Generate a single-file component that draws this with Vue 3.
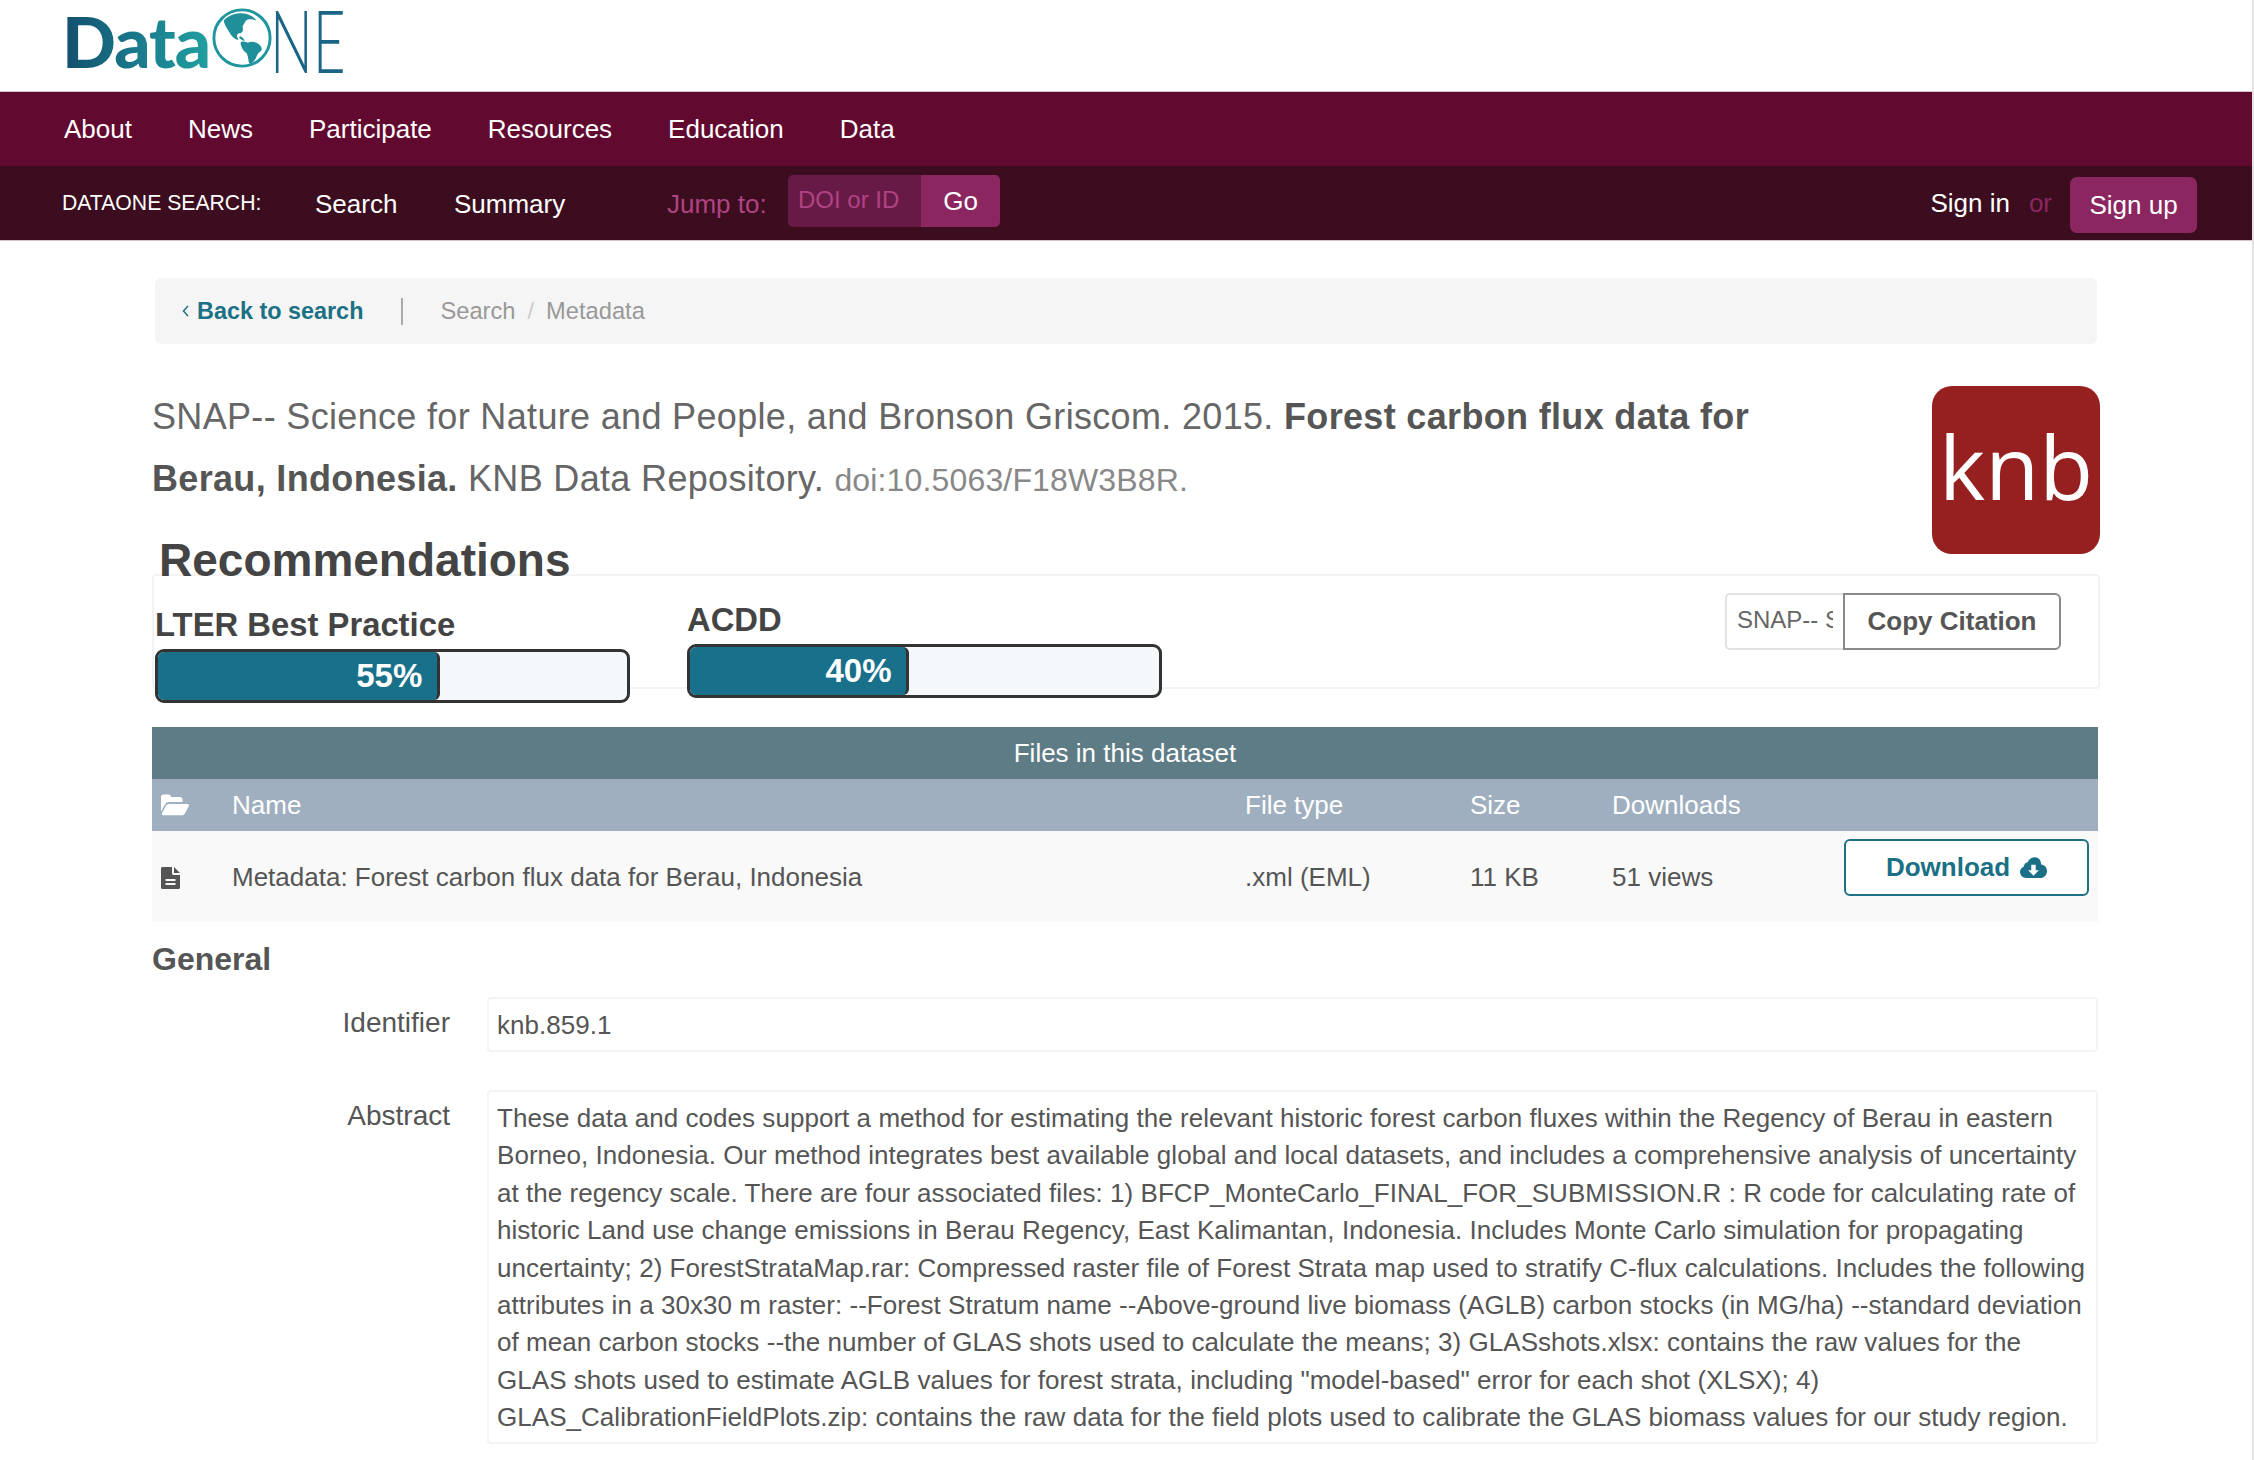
<script setup>
const mainNav = ["About", "News", "Participate", "Resources", "Education", "Data"];

const bars = [
  { label: "LTER Best Practice", value: 55, fill: "60.2%", cls: "score-lter" },
  { label: "ACDD", value: 40, fill: "46.8%", cls: "score-acdd" },
];

const abstractLines = [
  "These data and codes support a method for estimating the relevant historic forest carbon fluxes within the Regency of Berau in eastern",
  "Borneo, Indonesia. Our method integrates best available global and local datasets, and includes a comprehensive analysis of uncertainty",
  "at the regency scale. There are four associated files: 1) BFCP_MonteCarlo_FINAL_FOR_SUBMISSION.R : R code for calculating rate of",
  "historic Land use change emissions in Berau Regency, East Kalimantan, Indonesia. Includes Monte Carlo simulation for propagating",
  "uncertainty; 2) ForestStrataMap.rar: Compressed raster file of Forest Strata map used to stratify C-flux calculations. Includes the following",
  "attributes in a 30x30 m raster: --Forest Stratum name --Above-ground live biomass (AGLB) carbon stocks (in MG/ha) --standard deviation",
  "of mean carbon stocks --the number of GLAS shots used to calculate the means; 3) GLASshots.xlsx: contains the raw values for the",
  "GLAS shots used to estimate AGLB values for forest strata, including \"model-based\" error for each shot (XLSX); 4)",
  "GLAS_CalibrationFieldPlots.zip: contains the raw data for the field plots used to calibrate the GLAS biomass values for our study region.",
];
</script>

<template>
  <div class="page">
    <header class="logo-bar">
      <div class="logo">
        <span class="logo-data">Data</span>
        <svg class="globe" viewBox="0 0 64 64" aria-hidden="true">
          <circle cx="32" cy="32" r="29" fill="none" stroke="#1f959d" stroke-width="3" />
          <path fill="#1f8f9a" d="M14 13c5-5 14-8 22-6 4 1 9 4 11 7-3-1-6-2-9-1-3 1-3 4-5 6-1 2 1 5-1 7-2 2-4 0-5 3-1 2 2 4 1 5-4-1-7-4-9-8-2-3-4-6-5-9-1-2-1-3 0-4z" />
          <path fill="#1f8f9a" d="M31 36c2-1 5 0 7 1 4-2 9-1 12 2 2 2 3 4 2 6-2 2-4 3-5 6-1 3-4 7-7 8-2-3-1-7-3-11-2-2-4-3-5-6-1-2-2-4-1-6z" />
          <path fill="#1f8f9a" d="M30 30l3 2 2 3-3-1-3-2z" />
        </svg>
        <span class="logo-ne">NE</span>
      </div>
    </header>

    <nav class="main-nav">
      <a v-for="item in mainNav" :key="item">{{ item }}</a>
    </nav>

    <nav class="sub-nav">
      <span class="sub-title">DATAONE SEARCH:</span>
      <a class="sub-link sub-search">Search</a>
      <a class="sub-link sub-summary">Summary</a>
      <span class="jump-label">Jump to:</span>
      <div class="jump-group">
        <span class="jump-input">DOI or ID</span>
        <span class="jump-go">Go</span>
      </div>
      <div class="sign">
        <a class="sign-in">Sign in</a>
        <span class="sign-or">or</span>
        <a class="sign-up">Sign up</a>
      </div>
    </nav>

    <main class="content">
      <div class="breadcrumb">
        <a class="back">
          <svg class="back-icon" viewBox="0 0 8 14" aria-hidden="true">
            <path d="M6.5 2 2 7l4.500 5" fill="none" stroke="#1b7085" stroke-width="1.5" />
          </svg>
          Back to search
        </a>
        <span class="crumb-sep"></span>
        <span class="crumb">Search</span>
        <span class="crumb-slash">/</span>
        <span class="crumb">Metadata</span>
      </div>

      <div class="citation-row">
        <p class="citation">
          SNAP-- Science for Nature and People, and Bronson Griscom. 2015.
          <b>Forest carbon flux data for<br />Berau, Indonesia.</b>
          KNB Data Repository. <span class="doi">doi:10.5063/F18W3B8R.</span>
        </p>
        <div class="knb">knb</div>
      </div>

      <h2 class="rec-title">Recommendations</h2>
      <section class="rec-panel">
        <div v-for="bar in bars" :key="bar.label" class="score" :class="bar.cls">
          <div class="score-label">{{ bar.label }}</div>
          <div class="score-track">
            <div class="score-fill" :style="{ width: bar.fill }">{{ bar.value }}%</div>
          </div>
        </div>
        <div class="copy-group">
          <div class="copy-input"><span class="copy-clip">SNAP-- Scien</span></div>
          <span class="copy-btn">Copy Citation</span>
        </div>
      </section>

      <section class="files">
        <div class="files-title">Files in this dataset</div>
        <div class="files-row files-head">
          <svg class="row-icon" viewBox="0 0 28 22" aria-hidden="true">
            <path fill="#fff" d="M0 3c0-1.500 1-2.500 2.500-2.500h5c1.500 0 2.500 1 2.500 2.500h9c1.500 0 2.500 1 2.500 2.500V8H8c-2 0-3 .8-4 2.500L0 17.500z" />
            <path fill="#fff" d="M8 10h18.500c1.200 0 1.800 1 1.300 2l-4 7.500c-.6 1-1.500 1.800-2.800 1.800H2.300c-1.200 0-1.800-1-1.300-2l4-7.500c.6-1.100 1.700-1.800 3-1.800z" />
          </svg>
          <span class="col-name">Name</span>
          <span class="col-type">File type</span>
          <span class="col-size">Size</span>
          <span class="col-dl">Downloads</span>
        </div>
        <div class="files-row files-item">
          <svg class="row-icon doc-icon" viewBox="0 0 20 22" aria-hidden="true">
            <path fill="#555" fill-rule="evenodd" d="M1.500 0H11v6.500c0 .8.700 1.500 1.500 1.500H19v12.500c0 .8-.7 1.500-1.500 1.500h-16C.7 22 0 21.300 0 20.500v-19C0 .7.700 0 1.500 0zM13 0l6 6h-6zM4.500 12v2h10v-2zm0 4v2h10v-2z" />
          </svg>
          <span class="col-name">Metadata: Forest carbon flux data for Berau, Indonesia</span>
          <span class="col-type">.xml (EML)</span>
          <span class="col-size">11 KB</span>
          <span class="col-dl">51 views</span>
          <a class="download">
            Download
            <svg class="cloud" viewBox="0 0 30 24" aria-hidden="true">
              <path fill="#1b7085" fill-rule="evenodd" d="M7 23c-3.800 0-7-2.800-7-6.500 0-2.800 1.700-5 4.200-6C4.400 8 6 6 8.500 5.500 10 2.200 13 0 16.500 0c4.200 0 7 3.500 7 8 3.700.4 6.500 3.300 6.500 7.200 0 4.300-3.300 7.800-7.300 7.800zM12.500 8.500v6H9l6 6 6-6h-3.500v-6z" />
            </svg>
          </a>
        </div>
      </section>

      <h3 class="general">General</h3>
      <div class="field id-field">
        <div class="field-label">Identifier</div>
        <div class="field-box id-box">knb.859.1</div>
      </div>
      <div class="field abstract">
        <div class="field-label">Abstract</div>
        <div class="field-box abstract-box">
          <div v-for="line in abstractLines" :key="line" class="abstract-line">{{ line }}</div>
        </div>
      </div>
    </main>
  </div>
</template>

<style>
html, body {
  margin: 0;
  background: #fff;
}
</style>

<style scoped>
.page {
  width: 2254px;
  height: 1460px;
  overflow: hidden;
  font-family: "Liberation Sans", Arial, sans-serif;
  color: #555;
  background: #fff;
  box-sizing: border-box;
  border-right: 2px solid #e4e4e4;
}
a { cursor: pointer; }

/* logo */
.logo-bar {
  height: 91px;
  box-sizing: border-box;
  padding: 3px 0 0 62px;
}
.logo {
  display: flex;
  align-items: flex-start;
  height: 79px;
  margin-top: -3px;
}
.logo-data {
  font-family: Lato, "Liberation Sans", sans-serif;
  font-weight: 900;
  font-size: 71px;
  line-height: 82px;
  letter-spacing: -1px;
  background: linear-gradient(90deg, #134e6d 0%, #1a7d8e 55%, #21a0a0 100%);
  -webkit-background-clip: text;
  background-clip: text;
  color: transparent;
}
.globe {
  width: 62px;
  height: 62px;
  margin: 7px 0 0 1px;
  flex: none;
}
.logo-ne {
  font-family: Lato, "Liberation Sans", sans-serif;
  font-weight: 300;
  font-size: 86px;
  line-height: 80px;
  color: #1a6486;
  transform: scaleX(.66);
  transform-origin: left top;
  margin-left: -3px;
}

/* nav bars */
.main-nav {
  height: 75px;
  box-sizing: border-box;
  background: #62092f;
  border-top: 1px solid #d9c3cd;
  display: flex;
  align-items: center;
  gap: 56px;
  padding-left: 64px;
  font-size: 26px;
  color: #fff;
}
.sub-nav {
  height: 75px;
  box-sizing: border-box;
  background: #3b0d1e;
  border-bottom: 1px solid #d9c3cd;
  display: flex;
  align-items: center;
  padding-left: 62px;
  color: #fff;
  font-size: 26px;
}
.sub-title { font-size: 21.2px; width: 253px; }
.sub-link { position: relative; top: 1px; }
.sub-search { width: 139px; }
.sub-summary { width: 213px; }
.jump-label {
  color: #b04383;
  font-size: 26px;
  width: 121px;
  position: relative;
  top: 1px;
}
.jump-group {
  display: flex;
  height: 52px;
  margin-top: -4px;
  border-radius: 5px;
  overflow: hidden;
}
.jump-input {
  width: 133px;
  box-sizing: border-box;
  padding: 5px 0 0 10px;
  background: #671a46;
  color: #b04383;
  font-size: 24px;
  line-height: 40px;
}
.jump-go {
  width: 79px;
  background: #8c2660;
  text-align: center;
  line-height: 52px;
}
.sign {
  margin-left: auto;
  margin-right: 55px;
  display: flex;
  align-items: center;
}
.sign-or { color: #8c2660; margin: 0 18px 0 19px; }
.sign-up {
  background: #8c2660;
  border-radius: 7px;
  width: 127px;
  height: 56px;
  line-height: 56px;
  text-align: center;
  margin-top: 4px;
}

/* content */
.content { padding: 37px 154px 0 152px; }
.breadcrumb {
  margin: 0 0 0 3px;
  width: 1942px;
  height: 66px;
  background: #f5f5f5;
  border-radius: 6px;
  display: flex;
  align-items: center;
  padding-left: 26px;
  box-sizing: border-box;
  font-size: 23.7px;
}
.back {
  color: #1b7085;
  font-weight: 700;
  font-size: 23.4px;
  display: flex;
  align-items: center;
  gap: 7px;
}
.back-icon { width: 9px; height: 14px; }
.crumb-sep {
  width: 2px;
  height: 27px;
  background: #aaa;
  margin: 0 37px 0 38px;
}
.crumb { color: #999; }
.crumb-slash { color: #ccc; margin: 0 12px; }

.citation-row {
  display: flex;
  justify-content: space-between;
  margin-top: 42px;
  height: 168px;
}
.citation {
  margin: 0;
  padding-top: 0;
  font-size: 36px;
  letter-spacing: .33px;
  line-height: 62px;
  color: #666;
  white-space: nowrap;
}
.citation b { color: #555; }
.doi { font-size: 32px; color: #888; letter-spacing: .15px; }
.knb {
  width: 168px;
  height: 168px;
  margin-right: -2px;
  background: #96201f;
  border-radius: 20px;
  color: #fff;
  font-family: "Open Sans", sans-serif;
  font-size: 88px;
  line-height: 160px;
  text-align: center;
}

.rec-title {
  margin: -17px 0 0 7px;
  font-size: 46px;
  line-height: 46px;
  height: 37px;
  color: #444;
}
.rec-panel {
  height: 115px;
  box-sizing: border-box;
  border: 2px solid #f3f3f3;
  border-radius: 4px;
  display: flex;
  align-items: flex-start;
  width: 1948px;
}
.score { width: 475px; flex: none; }
.score-lter { margin: 26px 0 0 1px; }
.score-acdd { margin: 21px 0 0 57px; }
.score-label {
  font-size: 32.8px;
  line-height: 46px;
  font-weight: 700;
  color: #444;
  white-space: nowrap;
}
.score-track {
  height: 54px;
  box-sizing: border-box;
  margin-top: 1px;
  border: 3px solid #333;
  border-radius: 9px;
  background: #f4f8fb;
  overflow: hidden;
}
.score-fill {
  height: 100%;
  background: #18708a;
  border-right: 3px solid #333;
  border-radius: 0 6px 6px 0;
  color: #fff;
  font-size: 33px;
  font-weight: 700;
  line-height: 47px;
  text-align: right;
  padding-right: 15px;
  box-sizing: border-box;
}
.copy-group {
  margin: 17px 37px 0 auto;
  display: flex;
  height: 57px;
}
.copy-input {
  width: 118px;
  box-sizing: border-box;
  padding: 0 9px 0 10px;
  border: 2px solid #e2e2e2;
  border-right: 0;
  border-radius: 5px 0 0 5px;
  font-size: 24px;
  line-height: 50px;
  color: #666;
  background: #fff;
}
.copy-clip {
  display: block;
  width: 96px;
  white-space: nowrap;
  overflow: hidden;
}
.copy-btn {
  width: 218px;
  box-sizing: border-box;
  border: 2px solid #8a8a8a;
  border-radius: 0 6px 6px 0;
  font-size: 26px;
  font-weight: 700;
  line-height: 53px;
  text-align: center;
  color: #555;
}

.files { margin-top: 38px; }
.files-title {
  height: 52px;
  background: #5e7c85;
  color: #fff;
  text-align: center;
  font-size: 26px;
  line-height: 52px;
}
.files-row {
  display: flex;
  align-items: center;
  position: relative;
  font-size: 26px;
}
.files-head {
  height: 52px;
  background: #9fafbf;
  color: #fff;
}
.files-item {
  height: 91px;
  box-sizing: border-box;
  padding-top: 2px;
  background: #f9f9f9;
  color: #555;
}
.row-icon { width: 28px; height: 22px; margin-left: 9px; flex: none; }
.doc-icon { width: 20px; height: 22px; margin-left: 9px; margin-right: 8px; }
.col-name { margin-left: 43px; width: 1013px; }
.col-type { width: 225px; }
.col-size { width: 142px; }
.col-dl { width: 233px; }
.download {
  margin-left: -1px;
  margin-top: -20px;
  width: 245px;
  height: 57px;
  flex: none;
  box-sizing: border-box;
  background: #fff;
  border: 2px solid #1f7085;
  border-radius: 6px;
  display: flex;
  align-items: center;
  justify-content: center;
  gap: 10px;
  color: #1b7085;
  font-weight: 700;
  font-size: 26px;
}
.cloud { width: 27px; height: 22px; }

.general {
  margin: 18px 0 0;
  font-size: 32px;
  line-height: 38px;
  color: #555;
}
.field {
  display: flex;
  align-items: flex-start;
  margin-top: 19px;
}
.id-field .field-label { margin-top: 10px; }
.field-label {
  width: 298px;
  text-align: right;
  flex: none;
  font-size: 28px;
  line-height: 32px;
  color: #555;
}
.field-box {
  margin-left: 37px;
  width: 1613px;
  box-sizing: border-box;
  border: 2px solid #f4f4f4;
  border-radius: 4px;
  padding-left: 8px;
  font-size: 26px;
  letter-spacing: .04px;
  color: #555;
}
.id-box { height: 55px; line-height: 53px; }
.abstract { margin-top: 38px; }
.abstract .field-label { margin-top: 10px; }
.abstract-box { height: 354px; padding-top: 8px; }
.abstract-line { line-height: 37.4px; white-space: nowrap; }
</style>
